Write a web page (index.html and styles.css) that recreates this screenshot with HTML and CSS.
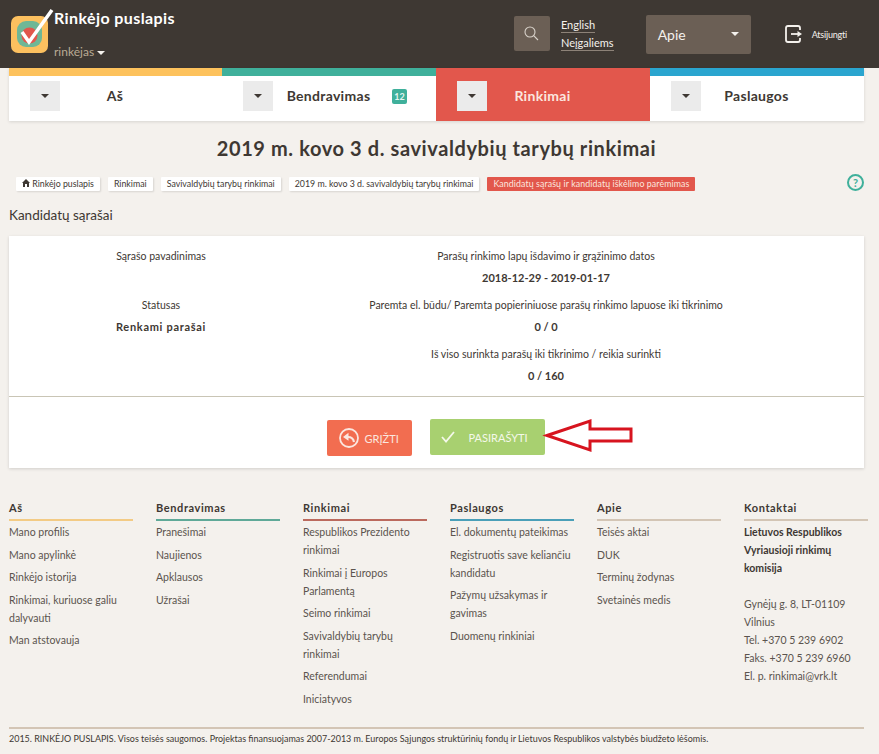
FILE: index.html
```html
<!DOCTYPE html>
<html>
	<head>
		<meta charset="UTF-8">
		<link rel="stylesheet" href="styles.css">
		<title>Rinkėjo puslapis</title>
	</head>
	<body>
		<header class="topbar">
			<svg class="logo" width="44" height="46" viewBox="0 0 44 46">
				<rect x="0" y="9" width="37" height="37" rx="7" fill="#fcc05f"/>
				<rect x="6" y="14" width="25" height="26" rx="9" fill="#6fb796"/>
				<circle cx="18.500" cy="28.500" r="8" fill="#e2574c"/>
				<path d="M11 25 L18 35 L41 3" fill="none" stroke="#fff" stroke-width="3.500"/>
			</svg>
			<div class="brand">
				<div class="brand-title">Rinkėjo puslapis</div>
				<div class="brand-role">rinkėjas <span class="caret caret-light"></span></div>
			</div>
			<div class="topbar-right">
				<div class="search-btn">
					<svg width="15" height="15" viewBox="0 0 15 15" fill="none" stroke="#d8d2ca" stroke-width="1.1">
						<circle cx="6" cy="6" r="5"/>
						<path d="M9.7 9.7 L14 14"/>
					</svg>
				</div>
				<div class="lang-links">
					<a class="lang-link">English</a>
					<a class="lang-link">Neįgaliems</a>
				</div>
				<div class="about-select">
					<span>Apie</span>
					<span class="caret caret-light"></span>
				</div>
				<div class="logout">
					<svg width="18" height="18" viewBox="0 0 18 18" fill="none" stroke="#f4f1ed" stroke-width="1.8">
						<path d="M15 5 V3 Q15 1 13 1 H3 Q1 1 1 3 V15 Q1 17 3 17 H13 Q15 17 15 15 V13"/>
						<path d="M6 9 H13"/>
						<path d="M12.500 6 L17 9 L12.500 12 Z" fill="#f4f1ed" stroke="none"/>
					</svg>
					<span>Atsijungti</span>
				</div>
			</div>
		</header>

		<nav class="tabs">
			<div class="tab tab-yellow">
				<span class="tab-btn"><span class="caret"></span></span>
				<span class="tab-label">Aš</span>
			</div>
			<div class="tab tab-teal">
				<span class="tab-btn"><span class="caret"></span></span>
				<span class="tab-label">Bendravimas</span>
				<span class="badge">12</span>
			</div>
			<div class="tab tab-active">
				<span class="tab-btn"><span class="caret"></span></span>
				<span class="tab-label">Rinkimai</span>
			</div>
			<div class="tab tab-blue">
				<span class="tab-btn"><span class="caret"></span></span>
				<span class="tab-label">Paslaugos</span>
			</div>
		</nav>

		<h1 class="page-title">2019 m. kovo 3 d. savivaldybių tarybų rinkimai</h1>

		<div class="crumbs-row">
			<div class="crumbs">
				<span class="crumb">
					<svg width="8" height="8" viewBox="0 0 8 8" fill="#3e3833"><path d="M4 0 L8 4 H7 V8 H5 V5 H3 V8 H1 V4 H0 Z"/></svg>
					Rinkėjo puslapis
				</span>
				<span class="crumb">Rinkimai</span>
				<span class="crumb">Savivaldybių tarybų rinkimai</span>
				<span class="crumb">2019 m. kovo 3 d. savivaldybių tarybų rinkimai</span>
				<span class="crumb crumb-current">Kandidatų sąrašų ir kandidatų iškėlimo parėmimas</span>
			</div>
			<span class="help">?</span>
		</div>

		<h2 class="section-title">Kandidatų sąrašai</h2>

		<section class="card">
			<div class="info">
				<div class="info-cell">
					<div class="info-label">Sąrašo pavadinimas</div>
				</div>
				<div class="info-cell">
					<div class="info-label">Parašų rinkimo lapų išdavimo ir grąžinimo datos</div>
					<div class="info-value">2018-12-29 - 2019-01-17</div>
				</div>
				<div class="info-cell">
					<div class="info-label">Statusas</div>
					<div class="info-value info-status">Renkami parašai</div>
				</div>
				<div class="info-cell">
					<div class="info-label">Paremta el. būdu/ Paremta popieriniuose parašų rinkimo lapuose iki tikrinimo</div>
					<div class="info-value">0 / 0</div>
				</div>
				<div class="info-cell"></div>
				<div class="info-cell">
					<div class="info-label">Iš viso surinkta parašų iki tikrinimo / reikia surinkti</div>
					<div class="info-value">0 / 160</div>
				</div>
			</div>
			<div class="actions">
				<button class="btn btn-back">
					<svg width="20" height="20" viewBox="0 0 20 20" fill="none" stroke="#fbe6df">
						<circle cx="10" cy="10" r="9" stroke-width="1.800"/>
						<path d="M15 14 Q14 9 9 9 H7" stroke-width="2.200"/>
						<path d="M9.500 4.800 V12.800 L4 9 Z" fill="#fbe6df" stroke="none"/>
					</svg>
					GRĮŽTI
				</button>
				<button class="btn btn-sign">
					<svg width="14" height="12" viewBox="0 0 14 12" fill="none" stroke="#f4f8ea" stroke-width="1.800">
						<path d="M1 6 L5 10.500 L13 1"/>
					</svg>
					PASIRAŠYTI
				</button>
				<svg class="arrow" width="94" height="36" viewBox="0 0 94 36">
					<path d="M6 17.500 L49 3 V11 H90 V23 H49 V32 Z" fill="#fff" stroke="#d7141f" stroke-width="3"/>
				</svg>
			</div>
		</section>

		<footer class="footer">
			<div class="footer-cols">
				<div class="footer-col">
					<h3 class="footer-head line-yellow">Aš</h3>
					<a class="footer-link">Mano profilis</a>
					<a class="footer-link">Mano apylinkė</a>
					<a class="footer-link">Rinkėjo istorija</a>
					<a class="footer-link">Rinkimai, kuriuose galiu dalyvauti</a>
					<a class="footer-link">Man atstovauja</a>
				</div>
				<div class="footer-col">
					<h3 class="footer-head line-teal">Bendravimas</h3>
					<a class="footer-link">Pranešimai</a>
					<a class="footer-link">Naujienos</a>
					<a class="footer-link">Apklausos</a>
					<a class="footer-link">Užrašai</a>
				</div>
				<div class="footer-col">
					<h3 class="footer-head line-red">Rinkimai</h3>
					<a class="footer-link">Respublikos Prezidento rinkimai</a>
					<a class="footer-link">Rinkimai į Europos Parlamentą</a>
					<a class="footer-link">Seimo rinkimai</a>
					<a class="footer-link">Savivaldybių tarybų rinkimai</a>
					<a class="footer-link">Referendumai</a>
					<a class="footer-link">Iniciatyvos</a>
				</div>
				<div class="footer-col">
					<h3 class="footer-head line-blue">Paslaugos</h3>
					<a class="footer-link">El. dokumentų pateikimas</a>
					<a class="footer-link">Registruotis save keliančiu kandidatu</a>
					<a class="footer-link">Pažymų užsakymas ir gavimas</a>
					<a class="footer-link">Duomenų rinkiniai</a>
				</div>
				<div class="footer-col">
					<h3 class="footer-head line-sand">Apie</h3>
					<a class="footer-link">Teisės aktai</a>
					<a class="footer-link">DUK</a>
					<a class="footer-link">Terminų žodynas</a>
					<a class="footer-link">Svetainės medis</a>
				</div>
				<div class="footer-col">
					<h3 class="footer-head line-sand">Kontaktai</h3>
					<p class="contact-name">Lietuvos Respublikos Vyriausioji rinkimų komisija</p>
					<p class="contact-text">Gynėjų g. 8, LT-01109 Vilnius<br>Tel. +370 5 239 6902<br>Faks. +370 5 239 6960<br>El. p. rinkimai@vrk.lt</p>
				</div>
			</div>
			<div class="copyright">2015. RINKĖJO PUSLAPIS. Visos teisės saugomos. Projektas finansuojamas 2007-2013 m. Europos Sąjungos struktūrinių fondų ir Lietuvos Respublikos valstybės biudžeto lėšomis.</div>
		</footer>
	</body>
</html>
```
FILE: styles.css
```css
body {
	margin: 0;
	background: #f4f1ed;
	color: #3e3833;
	font-family: "Lato", "Liberation Sans", sans-serif;
	font-size: 10.5px;
	overflow-x: hidden;
}

/* top bar */
.topbar {
	height: 68px;
	background: #3e3833;
	display: flex;
	box-sizing: border-box;
	padding: 0 32px 0 11px;
}
.logo {
	margin-top: 7px;
	flex: none;
}
.brand {
	margin-left: -1px;
}
.brand-title {
	margin-top: 8px;
	font-size: 16px;
	line-height: 20px;
	font-weight: 700;
	letter-spacing: 0.4px;
	color: #fff;
}
.brand-role {
	margin-top: 16px;
	font-size: 12px;
	line-height: 16px;
	color: #b9aa94;
}
.caret {
	display: inline-block;
	width: 0;
	height: 0;
	border-left: 4px solid transparent;
	border-right: 4px solid transparent;
	border-top: 4px solid #3e3833;
	vertical-align: middle;
}
.caret-light {
	border-top-color: #f4f1ed;
}
.topbar-right {
	margin-left: auto;
	display: flex;
	align-items: center;
}
.search-btn {
	width: 36px;
	height: 35px;
	margin-top: -1px;
	border-radius: 2px;
	background: #6b5f55;
	display: flex;
	align-items: center;
	justify-content: center;
}
.lang-links {
	margin-left: 11px;
	display: flex;
	flex-direction: column;
	align-items: flex-start;
	gap: 3px;
}
.lang-link {
	color: #f4f1ed;
	font-size: 11px;
	line-height: 14px;
	border-bottom: 1px solid #8d8278;
}
.about-select {
	margin-left: 32px;
	width: 105px;
	height: 39px;
	box-sizing: border-box;
	padding: 0 12px;
	border-radius: 2px;
	background: #6b5f55;
	color: #f4f1ed;
	font-size: 14px;
	display: flex;
	align-items: center;
	justify-content: space-between;
}
.logout {
	margin-left: 34px;
	display: flex;
	align-items: center;
	gap: 9px;
	color: #f4f1ed;
	font-size: 9px;
	letter-spacing: -0.2px;
}

/* main tabs */
.tabs {
	margin: 0 15px 0 9px;
	display: grid;
	grid-template-columns: 213px 214px 214px 214px;
	background: #fff;
	box-shadow: 0 1px 3px rgba(0, 0, 0, 0.12);
}
.tab {
	position: relative;
	height: 53px;
	box-sizing: border-box;
	padding: 5px 0 0 21px;
	border-top: 8px solid;
	display: flex;
	align-items: flex-start;
}
.tab-yellow {
	border-top-color: #fdc25d;
}
.tab-teal {
	border-top-color: #3fb09b;
}
.tab-blue {
	border-top-color: #2aa5cf;
}
.tab-active {
	border-top-color: #e2574c;
	background: #e2574c;
	color: #fbe6df;
}
.tab-btn {
	width: 30px;
	height: 30px;
	background: #ebebeb;
	display: flex;
	align-items: center;
	justify-content: center;
	flex: none;
}
.tab-label {
	flex: 1;
	padding-right: 52px;
	text-align: center;
	font-size: 14px;
	line-height: 29px;
	font-weight: 700;
	letter-spacing: 0.3px;
}
.badge {
	position: absolute;
	left: 170px;
	top: 13px;
	width: 15px;
	height: 15px;
	border-radius: 2px;
	background: #3fb09b;
	color: #e6f5f1;
	font-size: 9px;
	font-weight: 700;
	line-height: 15px;
	text-align: center;
}

/* heading + breadcrumbs */
.page-title {
	margin: 15px 0 0;
	padding-right: 6px;
	text-align: center;
	font-size: 20px;
	line-height: 24px;
	font-weight: 700;
	letter-spacing: 0.6px;
}
.crumbs-row {
	margin: 16px 15px 0 16px;
	display: flex;
	align-items: center;
	justify-content: space-between;
}
.crumbs {
	display: flex;
	gap: 8px;
}
.crumb {
	height: 14px;
	padding: 0 6px;
	border-radius: 1px;
	background: #fff;
	box-shadow: 1px 1px 2px rgba(0, 0, 0, 0.12);
	font-size: 8.8px;
	line-height: 14px;
	white-space: nowrap;
}
.crumb-current {
	background: #e2574c;
	color: #fbe6df;
	box-shadow: none;
	letter-spacing: 0.1px;
}
.help {
	width: 13px;
	height: 13px;
	margin-top: -2px;
	border: 2px solid #3fb09b;
	border-radius: 50%;
	color: #3fb09b;
	font-size: 11px;
	font-weight: 700;
	line-height: 13px;
	text-align: center;
}
.section-title {
	margin: 15px 0 0 9px;
	font-size: 13.5px;
	line-height: 18px;
	font-weight: 400;
}

/* card */
.card {
	margin: 12px 15px 0 9px;
	background: #fff;
	box-shadow: 0 1px 3px rgba(0, 0, 0, 0.15);
}
.info {
	height: 161px;
	box-sizing: border-box;
	padding-top: 10px;
	border-bottom: 1px solid #c9c5b5;
	display: grid;
	grid-template-columns: 304px 466px;
	grid-auto-rows: 49px;
}
.info-cell {
	text-align: center;
}
.info-label,
.info-value {
	line-height: 21px;
}
.info-value {
	font-size: 11px;
	font-weight: 700;
}
.info-status {
	letter-spacing: 0.7px;
}
.actions {
	position: relative;
	height: 71px;
	box-sizing: border-box;
	padding: 22px 2px 0 0;
	display: flex;
	justify-content: center;
	align-items: flex-start;
	gap: 18px;
}
.btn {
	height: 36px;
	border: 0;
	border-radius: 2px;
	font-family: inherit;
	font-size: 11px;
	display: flex;
	align-items: center;
	padding: 0;
}
.btn-back {
	width: 85px;
	margin-top: 1px;
	padding-left: 12px;
	gap: 6px;
	background: #f26d50;
	color: #fbe6df;
}
.btn-sign {
	width: 115px;
	padding-left: 11px;
	gap: 14px;
	background: #a8d070;
	color: #f4f8ea;
}
.arrow {
	position: absolute;
	left: 532px;
	top: 21px;
}

/* footer */
.footer {
	margin: 32px 15px 0 9px;
}
.footer-cols {
	display: grid;
	grid-template-columns: repeat(6, 124px);
	column-gap: 23px;
	height: 227px;
}
.footer-head {
	margin: 0 0 2px;
	padding-bottom: 3px;
	border-bottom: 2px solid;
	font-size: 11px;
	line-height: 16px;
	font-weight: 700;
	letter-spacing: 0.6px;
}
.line-yellow {
	border-bottom-color: #f3cb85;
}
.line-teal {
	border-bottom-color: #5fa998;
}
.line-red {
	border-bottom-color: #bb6a5e;
}
.line-blue {
	border-bottom-color: #4a9fb8;
}
.line-sand {
	border-bottom-color: #d3c5b5;
}
.footer-link {
	display: block;
	margin-bottom: 4.5px;
	line-height: 18px;
	color: #5b544e;
}
.contact-name {
	margin: 0 0 18px;
	line-height: 18px;
	font-weight: 700;
}
.contact-text {
	margin: 0;
	line-height: 18px;
	color: #5b544e;
}
.copyright {
	border-top: 2px solid #d3c5b5;
	padding-top: 3px;
	font-size: 8.96px;
	line-height: 14px;
	white-space: nowrap;
}
```
